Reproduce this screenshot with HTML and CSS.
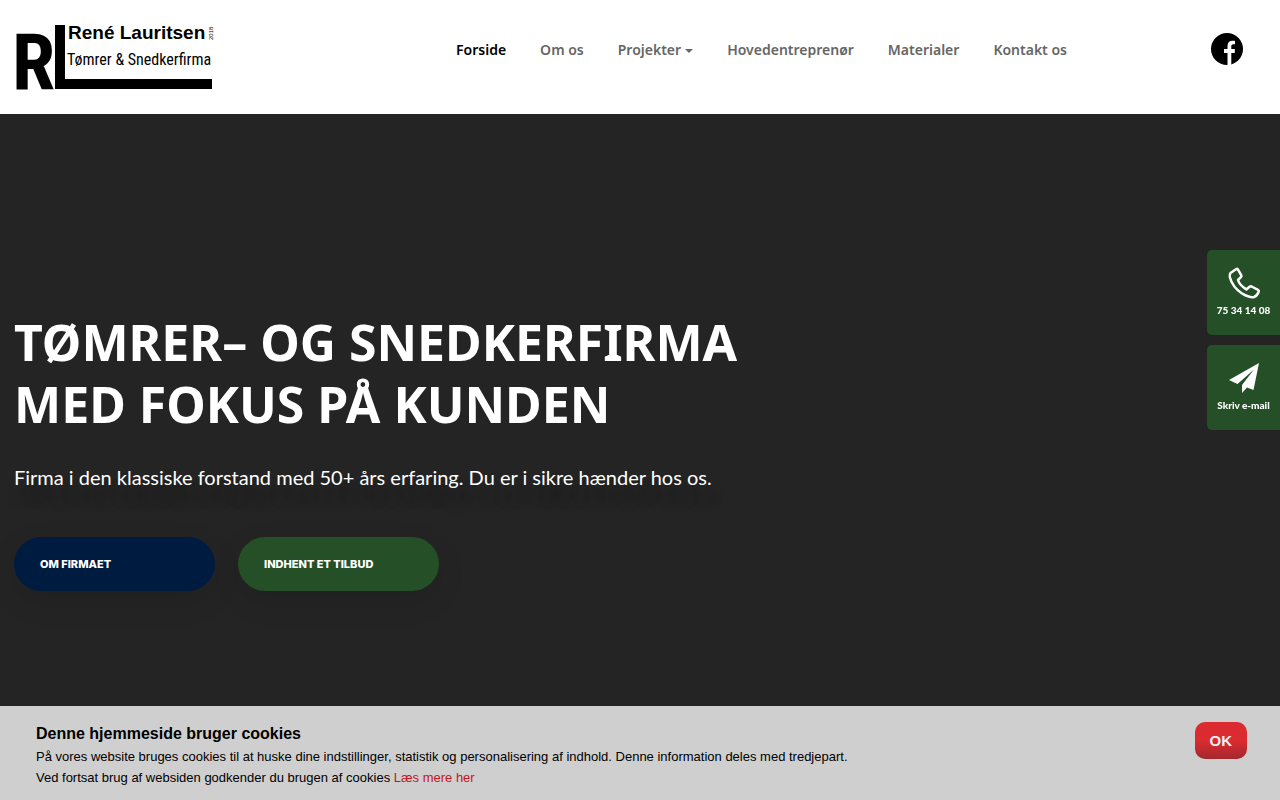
FILE: index.html
```html
<!DOCTYPE html>
<html lang="da">
<head>
    <meta charset="UTF-8">
    <meta name="viewport" content="width=device-width, initial-scale=1.0">
    <title>René Lauritsen - Tømrer &amp; Snedkerfirma</title>
    <link rel="stylesheet" href="styles.css">
</head>
<body>

<header class="header">
    <a class="logo" href="#" aria-label="René Lauritsen Tømrer &amp; Snedkerfirma">
        <svg width="198" height="66" viewBox="0 0 198 66">
            <text class="logo-initial" x="-4" y="65">R</text>
            <path d="M39 1h10v54h147v10H39z"/>
            <text class="logo-name" x="52" y="15">René Lauritsen</text>
            <text class="logo-tagline" x="51" y="41">Tømrer &amp; Snedkerfirma</text>
            <text class="logo-suffix" transform="translate(197 16) rotate(-90)">2018</text>
        </svg>
    </a>
    <nav class="nav">
        <a class="active" href="#">Forside</a>
        <a href="#">Om os</a>
        <a class="dropdown" href="#">Projekter</a>
        <a href="#">Hovedentreprenør</a>
        <a href="#">Materialer</a>
        <a href="#">Kontakt os</a>
    </nav>
    <a class="facebook" href="#" aria-label="Facebook">
        <svg width="32" height="32" viewBox="0 0 32 32">
            <circle cx="16" cy="16" r="16"/>
            <path fill="#fff" d="M16.500 32V20H13v-4h3.500v-3c0-3.500 2-5.300 5-5.300 1.300 0 2.500.2 2.500.2v3.300h-1.700c-1.500 0-2 1-2 2V16h3.500v4h-3.500v12z"/>
        </svg>
    </a>
</header>

<main class="hero">
    <h1>Tømrer– og snedkerfirma<br>med fokus på kunden</h1>
    <p>Firma i den klassiske forstand med 50+ års erfaring. Du er i sikre hænder hos os.</p>
    <div class="buttons">
        <a class="btn btn-blue" href="#">Om firmaet</a>
        <a class="btn btn-green" href="#">Indhent et tilbud</a>
    </div>
</main>

<aside class="sidebar">
    <a href="#">
        <svg width="32" height="32" viewBox="0 0 32 32">
            <path fill="none" stroke="#fff" stroke-width="2.500" stroke-linejoin="round" d="M2.500 6 8.300 2q1-.5 1.600.4l3.400 6q.4 1-.4 1.800L10 13q1.300 4.800 8.300 9.400l3.600-2.800q.8-.5 1.700-.1l6.400 3.300q1.200.7.700 1.900-1.600 4.300-4.900 5.500-4.100.8-11.500-3.500Q4.300 20.200 1.800 10 1.400 7.500 2.500 6z"/>
        </svg>
        <span>75 34 14 08</span>
    </a>
    <a href="#">
        <svg width="32" height="32" viewBox="0 0 32 32">
            <path fill="#fff" d="M31 1 1 18l8.500 4L26 7.500 14 23v8l5-5.600 6.500 2.600z"/>
        </svg>
        <span>Skriv e-mail</span>
    </a>
</aside>

<section class="cookies">
    <div>
        <h2>Denne hjemmeside bruger cookies</h2>
        <p>På vores website bruges cookies til at huske dine indstillinger, statistik og personalisering af indhold. Denne information deles med tredjepart.</p>
        <p>Ved fortsat brug af websiden godkender du brugen af cookies <a href="#">Læs mere her</a></p>
    </div>
    <button type="button">OK</button>
</section>

</body>
</html>
```
FILE: styles.css
```css
* {
    box-sizing: border-box;
}
body {
    margin: 0;
    min-height: 100vh;
    display: flex;
    flex-direction: column;
    font-family: "Noto Sans", sans-serif;
    background-color: #242424;
}
a {
    text-decoration: none;
}
h1, h2, p {
    margin: 0;
}
svg {
    display: block;
    overflow: visible;
}

/* Header */
.header {
    display: grid;
    grid-template-columns: 5fr auto 2fr;
    align-items: start;
    padding: 24px 37px 24px 16px;
    background: white;
}
.logo-initial {
    font: bold 78px "Roboto Condensed", "Liberation Sans Narrow", sans-serif;
}
.logo-name {
    font: bold 19px "Liberation Sans", sans-serif;
}
.logo-tagline {
    font: 16px "Roboto Condensed", "Liberation Sans Narrow", sans-serif;
}
.logo-suffix {
    font: 6px "Liberation Sans", sans-serif;
}
.nav {
    display: flex;
    gap: 34px;
    padding-top: 16px;
    font-size: 14px;
    font-weight: 600;
    line-height: 20px;
}
.nav a {
    color: #666;
}
.nav .active {
    color: black;
}
.dropdown::after {
    content: "";
    display: inline-block;
    margin-left: 4px;
    vertical-align: 2px;
    border: 4px solid transparent;
    border-top-color: #666;
    border-bottom: 0;
}
.facebook {
    justify-self: end;
    padding-top: 9px;
}

/* Hero */
.hero {
    padding: 197px 14px 116px;
    color: white;
}
.hero h1 {
    font-size: 50px;
    line-height: 62px;
    text-transform: uppercase;
}
.hero p {
    margin-top: 28px;
    font-family: Lato, sans-serif;
    font-size: 20px;
    line-height: 28px;
    text-shadow: 5px 15px 15px rgba(0, 0, 0, 0.3);
}
.buttons {
    display: flex;
    gap: 23px;
    margin-top: 46px;
}
.btn {
    width: 201px;
    padding: 17px 26px;
    border-radius: 27px;
    color: white;
    font-family: Inter, sans-serif;
    font-size: 11px;
    font-weight: 800;
    line-height: 20px;
    text-transform: uppercase;
    box-shadow: 0 10px 30px rgba(0, 0, 0, 0.1);
}
.btn-blue {
    background: #001b40;
}
.btn-green {
    background: #254f26;
}

/* Contact tabs on the right edge */
.sidebar {
    position: fixed;
    top: 250px;
    right: 0;
    display: grid;
    gap: 10px;
}
.sidebar a {
    display: flex;
    flex-direction: column;
    align-items: center;
    gap: 4px;
    width: 73px;
    padding: 17px 0 18px;
    border-radius: 5px 0 0 5px;
    background: #254f26;
    color: white;
    font-family: Lato, sans-serif;
    font-size: 10px;
    font-weight: 900;
    line-height: 14px;
}

/* Cookie bar */
.cookies {
    position: fixed;
    left: 0;
    right: 0;
    bottom: 0;
    display: flex;
    justify-content: space-between;
    align-items: flex-start;
    padding: 16px 33px 12px 36px;
    background: #cfcfcf;
    font-family: "Liberation Sans", sans-serif;
}
.cookies h2 {
    font-size: 16px;
    line-height: 24px;
}
.cookies p {
    font-size: 13px;
    line-height: 21px;
}
.cookies p a {
    color: #c4161c;
}
.cookies button {
    padding: 9px 15px;
    border: none;
    border-radius: 10px;
    background: linear-gradient(#db2b31 50%, #a3282c);
    color: #eee;
    font-family: "Liberation Sans", sans-serif;
    font-size: 15px;
    font-weight: bold;
    line-height: 19px;
    cursor: pointer;
}
```
